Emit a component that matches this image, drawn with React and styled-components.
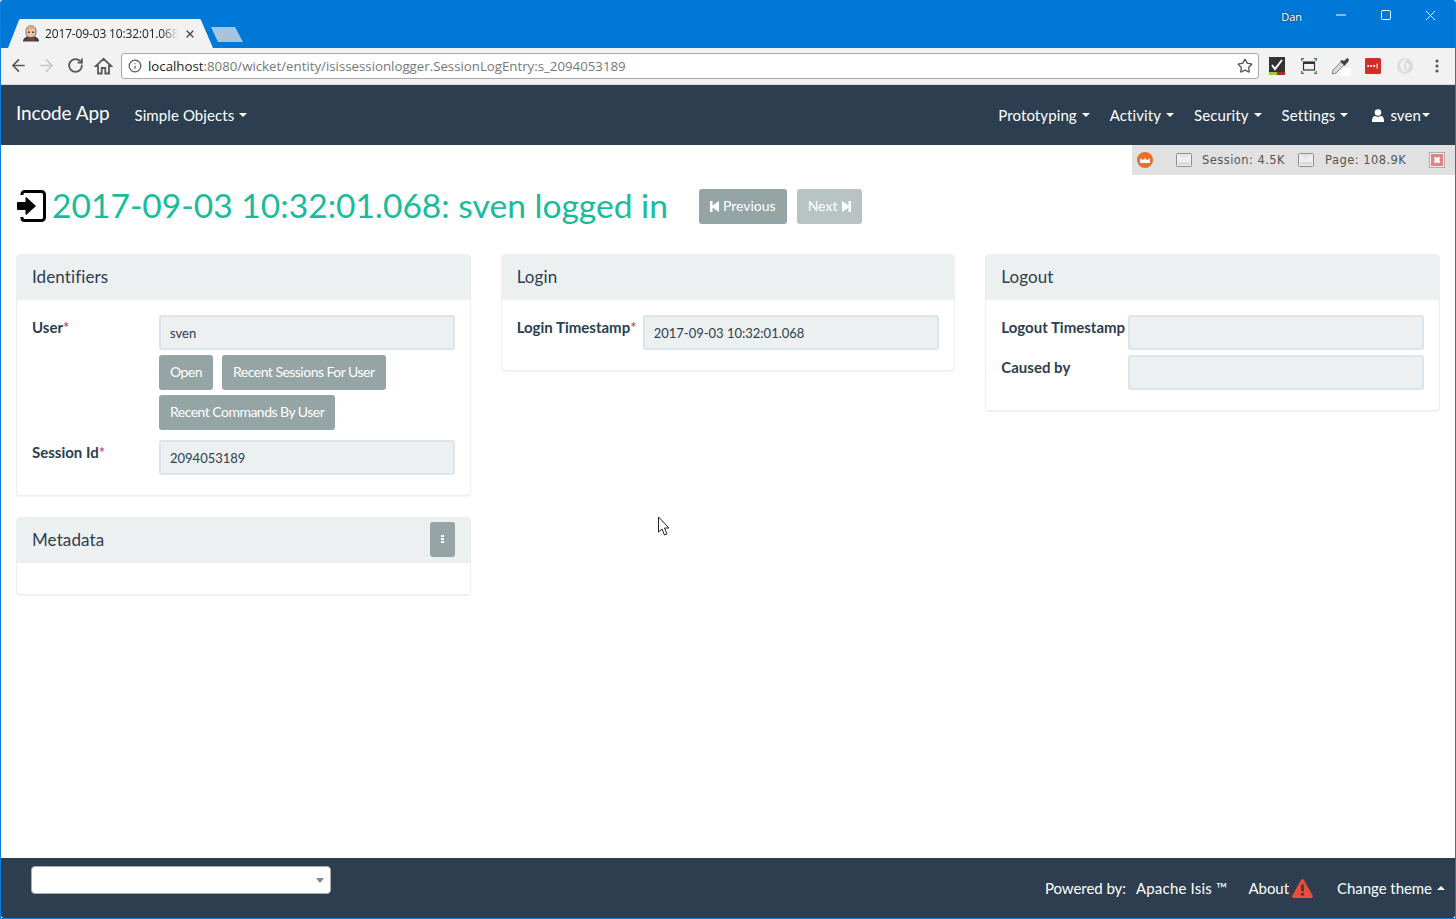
import React from "react";
import styled, { createGlobalStyle } from "styled-components";
import { ArrowLeft, ArrowRight, RotateCw, Star, Info, X, Minus, Square } from "lucide-react";

const Global = createGlobalStyle`
  html, body { margin: 0; padding: 0; height: 100%; background: #fff; }
  #root { height: 100%; }
  * { box-sizing: border-box; }
  body { font-family: Lato, "Open Sans", sans-serif; font-size: 15px; color: #2c3e50; }
`;

const Frame = styled.div`
  height: 919px; display: flex; flex-direction: column; overflow: hidden;
  border: 1px solid #0a7fde; border-top: 0; border-radius: 3px 3px 0 0;
`;
const TitleBar = styled.div`
  height: 48px; flex: none; background: #0078d7; display: flex; justify-content: space-between;
  padding: 0 2px 0 7px;
`;
const TabStrip = styled.div` display: flex; align-items: flex-end; `;
const Tab = styled.div`
  width: 205px; height: 29px; background: #f2f2f2; display: flex; align-items: center; gap: 6px;
  padding: 0 0 0 15px; clip-path: polygon(0 100%, 11px 1px, 12px 0, 192px 0, 193px 1px, 100% 100%);
  font: 12px "Open Sans", sans-serif; color: #222;
`;
const TabText = styled.span`
  width: 133px; white-space: nowrap; overflow: hidden; font: 12px "Open Sans", sans-serif; letter-spacing: -0.15px;
  -webkit-mask-image: linear-gradient(90deg, #000 88%, transparent);
  mask-image: linear-gradient(90deg, #000 88%, transparent);
`;
const NewTab = styled.div`
  width: 32px; height: 15px; margin: 0 0 6px -2px; background: #a6c4dc;
  clip-path: polygon(0 0, 24px 0, 100% 100%, 7px 100%);
`;
const WinRight = styled.div` display: flex; align-items: flex-start; `;
const UserName = styled.div`
  font: 11px "Open Sans", sans-serif; color: #fff; margin: 9px 16px 0 0; text-shadow: 0 0 2px #222;
`;
const WinBtn = styled.div`
  width: 45px; height: 30px; display: flex; align-items: center; justify-content: center; color: #fff;
`;
const Toolbar = styled.div`
  height: 37px; flex: none; background: #f2f2f2; display: flex; align-items: center; padding: 0 0 1px 3px;
  border-bottom: 1px solid #d8d8d8; color: #5a5a5a;
`;
const NavIcon = styled.div`
  width: ${p => p.$w || 28}px; display: flex; justify-content: center; color: ${p => p.$off ? "#c8c8c8" : "#5a5a5a"};
`;
const Omnibox = styled.div`
  width: 1138px; height: 26px; margin-left: 5px; background: #fff; border: 1px solid #a9a9a9; border-radius: 3px;
  display: flex; align-items: center; padding: 0 5px 0 6px; gap: 6px; font: 13.25px "Open Sans", sans-serif; color: #777;
`;
const Url = styled.div`
  flex: 1; white-space: nowrap;
  b { font-weight: 400; color: #222; }
`;
const ExtRow = styled.div` display: flex; margin-left: 2px; `;
const ExtSlot = styled.div` width: 32px; height: 24px; display: flex; align-items: center; justify-content: center; `;

const NavBar = styled.nav`
  height: 60px; flex: none; background: #2c3e50; color: #fff; display: flex; align-items: center;
  padding: 0 25px 0 15px; justify-content: space-between;
`;
const NavGroup = styled.div` display: flex; align-items: center; `;
const Brand = styled.div` font-size: 19px; margin: -5px 25px 0 0; letter-spacing: -0.1px; `;
const NavItem = styled.div`
  display: flex; align-items: center; margin-left: ${p => p.$ml ?? 0}px; white-space: nowrap; letter-spacing: 0.1px;
`;
const Caret = styled.i`
  display: inline-block; width: 0; height: 0; margin-left: ${p => p.$ml ?? 5}px;
  border-left: 4px solid transparent; border-right: 4px solid transparent;
  ${p => p.$up ? "border-bottom: 4px solid #fff;" : "border-top: 4px solid #fff;"}
`;

const Main = styled.main` flex: 1; position: relative; padding: 0 15px; `;
const DebugBar = styled.div`
  position: absolute; top: 0; right: 0; width: 323px; height: 30px; background: #e1e1e1;
  display: flex; align-items: center; padding: 0 0 0 5px;
  font: 11.5px "DejaVu Sans", sans-serif; color: #555; letter-spacing: 0.45px;
`;
const DebugCell = styled.span` margin-left: ${p => p.$ml}px; display: flex; align-items: center; `;
const Heading = styled.div`
  display: flex; align-items: center; height: 35px; margin: 44px 0 30px 1px;
`;
const Title = styled.h1`
  margin: -2px 31px 0 6px; font-weight: 400; font-size: 33.6px; color: #18bc9c; white-space: nowrap; line-height: 35px;
`;
const Btn = styled.div`
  display: inline-flex; align-items: center; height: 35px; padding: 0 11px 2px; border-radius: 3px; white-space: nowrap;
  background: #95a5a6; color: #fff; font-size: 14px; letter-spacing: -0.52px;
`;
const PagerBtn = styled(Btn)`
  background: ${p => p.$off ? "#b8c4c4" : "#95a5a6"}; letter-spacing: 0;
  margin-left: ${p => p.$ml ?? 0}px;
`;
const Columns = styled.div`
  display: grid; grid-template-columns: repeat(3, 1fr); gap: 30px; align-items: start;
`;
const Column = styled.div` display: flex; flex-direction: column; gap: 21px; `;
const Panel = styled.section`
  border: 1px solid #eeeeee; border-radius: 4px; box-shadow: 0 1px 1px rgba(0,0,0,.05); overflow: hidden; background: #fff;
`;
const PanelHead = styled.header`
  height: 46px; margin-top: -1px; background: #ecf0f1; display: flex; align-items: center; justify-content: space-between;
  padding: 0 15px 2px; font-size: 17px; letter-spacing: 0.1px;
`;
const PanelBody = styled.div` padding: 15px 15px 20px; `;
const EmptyBody = styled.div` height: 31px; `;
const Row = styled.div`
  display: flex; & + & { margin-top: 5px; }
`;
const Label = styled.label`
  width: ${p => p.$w || 127}px; flex: none; font-weight: 700; line-height: 24px; white-space: nowrap;
  em { font-style: normal; font-weight: 400; color: #c7254e; }
`;
const FieldCol = styled.div` flex: 1; min-width: 0; `;
const Field = styled.div`
  height: 35px; background: #ecf0f1; border: 2px solid #dce4ec; border-radius: 3px; padding: 0 9px;
  display: flex; align-items: center; font-size: 13px; white-space: nowrap;
`;
const Actions = styled.div` display: flex; flex-wrap: wrap; gap: 5px 9px; margin: 5px 0; `;
const MenuBtn = styled.div`
  width: 25px; height: 35px; background: #95a5a6; border-radius: 3px; display: flex; flex-direction: column;
  align-items: center; justify-content: center; gap: 1px; i { width: 3px; height: 2px; background: #fff; display: block; }
`;
const Pointer = styled.svg` position: absolute; left: 656px; top: 371px; `;
const Footer = styled.footer`
  height: 60px; flex: none; background: #2c3e50; color: #fff; display: flex; justify-content: space-between; align-items: center;
  padding: 0 10px 0 30px; border-radius: 0 0 3px 3px; letter-spacing: -0.05px;
`;
const Combo = styled.div`
  width: 300px; height: 28px; margin-top: -16px; background: #fff; border: 1px solid #aaa; border-radius: 4px;
  display: flex; align-items: center; justify-content: flex-end; padding-right: 6px;
  i { width: 0; height: 0; border-left: 4px solid transparent; border-right: 4px solid transparent; border-top: 5px solid #888; }
`;
const FootGroup = styled.div` display: flex; align-items: center; white-space: nowrap; `;
const FootText = styled.span`
  margin-left: ${p => p.$ml ?? 0}px; letter-spacing: ${p => p.$ls ?? -0.05}px;
`;
const BtnIconLeft = styled.svg` margin-right: 4px; margin-top: 2px; `;
const BtnIconRight = styled.svg` margin-left: 5px; margin-top: 2px; `;
const WarnIcon = styled.svg` margin-left: 3px; `;
const UserGlyph = styled.svg` margin-right: 6px; `;

const Favicon = () => (
  <svg width="16" height="17" viewBox="0 0 16 17">
    <path d="M0 16.500c0-3 2-4 4-5h8c2 1 4 2 4 5z" fill="#34424e" />
    <path d="M3 6.500C3 2.500 5 .8 8 .8s5 1.700 5 5.700-1.500 7-5 7-5-3-5-7z" fill="#eec4a4" stroke="#6e4a36" strokeWidth=".8" />
    <path d="M3.300 7C2.700 3.500 5 .8 8 .8c3 0 4.500 1.500 4.200 4-2-1.500-6-1.500-8.900 2.200z" fill="#d8ac8c" />
    <path d="M5 10.500c1 2 5 2 6 0l-.5 2.500h-5z" fill="#555" />
    <path d="M4.500 13.500l3.500 1 3.500-1v2.700L8 15.200l-3.500 1z" fill="#b3262c" />
    <rect x="4.800" y="6.500" width="2.200" height="1.400" fill="#444" /><rect x="9" y="6.500" width="2.200" height="1.400" fill="#444" />
  </svg>
);
const HomeIcon = () => (
  <svg width="19" height="18" viewBox="0 0 19 18">
    <path d="M9.500 1.800L1.800 9H4v7.500h3.700V11h3.600v5.500H15V9h2.200z" fill="none" stroke="#5a5a5a" strokeWidth="1.800" strokeLinejoin="miter" />
  </svg>
);
const Ext1 = () => (
  <svg width="16" height="18" viewBox="0 0 16 18">
    <rect width="16" height="18" fill="#333" />
    <path d="M3 8l3 4 7-9" fill="none" stroke="#fff" strokeWidth="2" />
    <rect y="15" width="8" height="3" fill="#a4c639" /><rect x="8" y="15" width="8" height="3" fill="#b3262c" />
  </svg>
);
const Ext2 = () => (
  <svg width="16" height="16" viewBox="0 0 16 16">
    <rect x="2.500" y="4" width="11" height="8" fill="none" stroke="#333" strokeWidth="1.200" />
    <rect x="2.500" y="4" width="11" height="2" fill="#333" />
    <path d="M.7 3V.7H3M13 .7h2.300V3M15.300 13v2.300H13M3 15.300H.7V13" fill="none" stroke="#2e8b3a" strokeWidth="1.300" />
  </svg>
);
const Ext3 = () => (
  <svg width="20" height="20" viewBox="0 0 20 20">
    <path d="M1 18l1-4L10 6l3 3-8 8z" fill="#d8d8d8" stroke="#888" />
    <path d="M9 5l5 5 1-2 2-2c2-2 0-5-2-3l-2 2-2-1z" fill="#444" />
    <rect x="10" y="12" width="11" height="11" fill="#fff" />
  </svg>
);
const Ext4 = () => (
  <svg width="16" height="16" viewBox="0 0 16 16">
    <rect width="16" height="16" rx="1.500" fill="#d32d27" />
    <circle cx="3.200" cy="8" r="1.100" fill="#fff" /><circle cx="6.200" cy="8" r="1.100" fill="#fff" /><circle cx="9.200" cy="8" r="1.100" fill="#fff" />
    <rect x="11.600" y="5.500" width="1" height="5" fill="#fff" />
  </svg>
);
const Ext5 = () => (
  <svg width="16" height="16" viewBox="0 0 16 16">
    <circle cx="8" cy="8" r="8" fill="#dcdcdc" />
    <path d="M10 .5C5.500 1 3 4 3.500 8.500c.4 3 3 5.500 6.500 6-2-2-3.500-4-3.500-6.500S8 3.500 10 .5z" fill="#f4f4f4" />
    <path d="M8.500 5c2-1 3.500.5 3.500 3s-1.500 4-3 4c1-2 1-4-.5-7z" fill="#f4f4f4" />
  </svg>
);
const Dots = () => (
  <svg width="4" height="14" viewBox="0 0 4 14"><circle cx="2" cy="2" r="1.600" fill="#5a5a5a" /><circle cx="2" cy="7" r="1.600" fill="#5a5a5a" /><circle cx="2" cy="12" r="1.600" fill="#5a5a5a" /></svg>
);
const SignIn = () => (
  <svg width="29" height="33" viewBox="0 0 29 33">
    <path d="M5 5V4A2.500 2.500 0 0 1 7.500 1.500H24.500A3 3 0 0 1 27.500 4.500V27.500A3 3 0 0 1 24.500 30.500H7.500A2.500 2.500 0 0 1 5 28V27" fill="none" stroke="#000" strokeWidth="3" />
    <path d="M.5 12.500H9V7.500L18.500 16 9 24.500V19.500H.5z" fill="#000" stroke="#000" strokeWidth="1" strokeLinejoin="round" />
  </svg>
);
const MailIcon = () => (
  <svg width="16" height="14" viewBox="0 0 16 14">
    <rect x=".5" y=".5" width="15" height="13" rx="1" fill="#efefef" stroke="#8f8f8f" />
    <path d="M1 1l7 5 7-5" fill="#e2e2e2" />
    <rect x="2" y="9" width="12" height="3" fill="#dcdcdc" />
  </svg>
);
const Crown = () => (
  <svg width="16" height="16" viewBox="0 0 16 16">
    <circle cx="8" cy="8" r="8" fill="#e8702a" />
    <path d="M3 6l2.500 2L8 6l2.500 2L13 6v5H3z" fill="#fff" />
    <path d="M3 6h2l1 1.500h4L11 6h2v1H3z" fill="#e8702a" opacity=".5" />
  </svg>
);
const CloseBox = () => (
  <svg width="16" height="16" viewBox="0 0 16 16">
    <rect x=".5" y=".5" width="15" height="15" fill="#f3f3f3" stroke="#aaa" />
    <rect x="2" y="2" width="12" height="12" fill="#de8087" />
    <path d="M5.500 5.500l5 5M10.500 5.500l-5 5" stroke="#fff" strokeWidth="2.500" />
  </svg>
);
const Prev = () => (
  <BtnIconLeft width="9" height="11" viewBox="0 0 9 11"><path d="M0 0h2.500v4.500L9 0v11L2.500 6.500V11H0z" fill="#fff" /></BtnIconLeft>
);
const Next = () => (
  <BtnIconRight width="9" height="11" viewBox="0 0 9 11"><path d="M9 0H6.500v4.500L0 0v11l6.500-4.500V11H9z" fill="#fff" /></BtnIconRight>
);
const Warning = () => (
  <WarnIcon width="21" height="19" viewBox="0 0 21 19">
    <path d="M10.500 0c.7 0 1.200.4 1.500 1l8.700 15.500c.6 1.100-.1 2.500-1.400 2.500H1.700C.4 19-.3 17.600.3 16.500L9 1c.3-.6.800-1 1.500-1z" fill="#e74c3c" />
    <rect x="9.200" y="5.500" width="2.600" height="7" fill="#2c3e50" /><rect x="9.200" y="14" width="2.600" height="2.600" fill="#2c3e50" />
  </WarnIcon>
);
const UserIcon = () => (
  <UserGlyph width="12" height="13" viewBox="0 0 12 13">
    <circle cx="6" cy="3.500" r="3.300" fill="#fff" />
    <path d="M0 13c-.2-4 1-6 3-6 1 1 5 1 6 0 2 0 3.200 2 3 6z" fill="#fff" />
  </UserGlyph>
);

export default function App() {
  return (
    <>
      <Global />
      <Frame>
        <TitleBar>
          <TabStrip>
            <Tab><Favicon /><TabText>2017-09-03 10:32:01.068: sven logged in</TabText><X size={12} color="#444" strokeWidth={2.5} /></Tab>
            <NewTab />
          </TabStrip>
          <WinRight>
            <UserName>Dan</UserName>
            <WinBtn><Minus size={16} strokeWidth={1} absoluteStrokeWidth /></WinBtn>
            <WinBtn><Square size={12} strokeWidth={1} absoluteStrokeWidth /></WinBtn>
            <WinBtn><X size={17} strokeWidth={1} absoluteStrokeWidth /></WinBtn>
          </WinRight>
        </TitleBar>
        <Toolbar>
          <NavIcon><ArrowLeft size={19} strokeWidth={2.2} /></NavIcon>
          <NavIcon $off><ArrowRight size={19} strokeWidth={2.2} /></NavIcon>
          <NavIcon $w={30}><RotateCw size={17} strokeWidth={2.6} /></NavIcon>
          <NavIcon $w={26}><HomeIcon /></NavIcon>
          <Omnibox>
            <Info size={14} color="#555" />
            <Url><b>localhost</b>:8080/wicket/entity/isissessionlogger.SessionLogEntry:s_2094053189</Url>
            <Star size={16} color="#555" strokeWidth={2} />
          </Omnibox>
          <ExtRow>
            <ExtSlot><Ext1 /></ExtSlot>
            <ExtSlot><Ext2 /></ExtSlot>
            <ExtSlot><Ext3 /></ExtSlot>
            <ExtSlot><Ext4 /></ExtSlot>
            <ExtSlot><Ext5 /></ExtSlot>
            <ExtSlot><Dots /></ExtSlot>
          </ExtRow>
        </Toolbar>
        <NavBar>
          <NavGroup>
            <Brand>Incode App</Brand>
            <NavItem>Simple Objects<Caret /></NavItem>
          </NavGroup>
          <NavGroup>
            <NavItem>Prototyping<Caret /></NavItem>
            <NavItem $ml={20}>Activity<Caret /></NavItem>
            <NavItem $ml={20}>Security<Caret /></NavItem>
            <NavItem $ml={20}>Settings<Caret /></NavItem>
            <NavItem $ml={24}><UserIcon />sven<Caret $ml={1} /></NavItem>
          </NavGroup>
        </NavBar>
        <Main>
          <DebugBar>
            <Crown />
            <DebugCell $ml={23}><MailIcon /></DebugCell>
            <DebugCell $ml={10}>Session: 4.5K</DebugCell>
            <DebugCell $ml={13}><MailIcon /></DebugCell>
            <DebugCell $ml={11}>Page: 108.9K</DebugCell>
            <DebugCell $ml={23}><CloseBox /></DebugCell>
          </DebugBar>
          <Heading>
            <SignIn />
            <Title>2017-09-03 10:32:01.068: sven logged in</Title>
            <PagerBtn><Prev />Previous</PagerBtn>
            <PagerBtn $off $ml={10}>Next<Next /></PagerBtn>
          </Heading>
          <Columns>
            <Column>
              <Panel>
                <PanelHead>Identifiers</PanelHead>
                <PanelBody>
                  <Row>
                    <Label>User<em>*</em></Label>
                    <FieldCol>
                      <Field>sven</Field>
                      <Actions>
                        <Btn>Open</Btn>
                        <Btn>Recent Sessions For User</Btn>
                        <Btn>Recent Commands By User</Btn>
                      </Actions>
                    </FieldCol>
                  </Row>
                  <Row>
                    <Label>Session Id<em>*</em></Label>
                    <FieldCol><Field>2094053189</Field></FieldCol>
                  </Row>
                </PanelBody>
              </Panel>
              <Panel>
                <PanelHead>Metadata<MenuBtn><i /><i /><i /></MenuBtn></PanelHead>
                <EmptyBody />
              </Panel>
            </Column>
            <Column>
              <Panel>
                <PanelHead>Login</PanelHead>
                <PanelBody>
                  <Row>
                    <Label $w={126}>Login Timestamp<em>*</em></Label>
                    <FieldCol><Field>2017-09-03 10:32:01.068</Field></FieldCol>
                  </Row>
                </PanelBody>
              </Panel>
            </Column>
            <Column>
              <Panel>
                <PanelHead>Logout</PanelHead>
                <PanelBody>
                  <Row>
                    <Label>Logout Timestamp</Label>
                    <FieldCol><Field /></FieldCol>
                  </Row>
                  <Row>
                    <Label>Caused by</Label>
                    <FieldCol><Field /></FieldCol>
                  </Row>
                </PanelBody>
              </Panel>
            </Column>
          </Columns>
          <Pointer width="14" height="21" viewBox="0 0 14 21">
            <path d="M1.500 1v15l3.500-3 2.500 6 2.500-1-2.500-6H12z" fill="#fff" stroke="#222" strokeWidth="1" />
          </Pointer>
        </Main>
        <Footer>
          <Combo><i /></Combo>
          <FootGroup>
            <FootText>Powered by:</FootText>
            <FootText $ml={10} $ls={0.2}>Apache Isis ™</FootText>
            <FootText $ml={21}>About</FootText>
            <Warning />
            <FootText $ml={24}>Change theme</FootText>
            <Caret $up />
          </FootGroup>
        </Footer>
      </Frame>
    </>
  );
}
